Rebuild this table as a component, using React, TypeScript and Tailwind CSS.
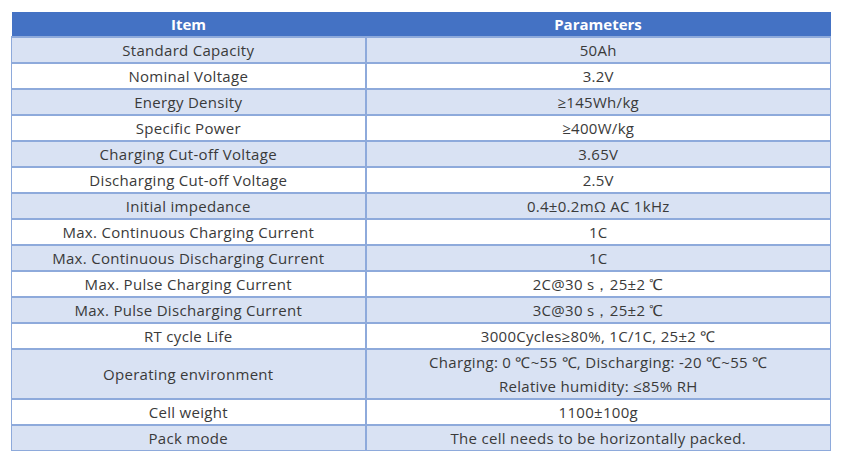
const rows: [string, string[]][] = [
  ['Standard Capacity', ['50Ah']],
  ['Nominal Voltage', ['3.2V']],
  ['Energy Density', ['≥145Wh/kg']],
  ['Specific Power', ['≥400W/kg']],
  ['Charging Cut-off Voltage', ['3.65V']],
  ['Discharging Cut-off Voltage', ['2.5V']],
  ['Initial impedance', ['0.4±0.2mΩ AC 1kHz']],
  ['Max. Continuous Charging Current', ['1C']],
  ['Max. Continuous Discharging Current', ['1C']],
  ['Max. Pulse Charging Current', ['2C@30 s，25±2 ℃']],
  ['Max. Pulse Discharging Current', ['3C@30 s，25±2 ℃']],
  ['RT cycle Life', ['3000Cycles≥80%, 1C/1C, 25±2 ℃']],
  ['Operating environment', ['Charging: 0 ℃~55 ℃, Discharging: -20 ℃~55 ℃', 'Relative humidity: ≤85% RH']],
  ['Cell weight', ['1100±100g']],
  ['Pack mode', ['The cell needs to be horizontally packed.']],
];

export default function App() {
  return (
    <div className="bg-white w-[841px] h-[462px] pt-[12px] pl-[11px] font-['Open_Sans',sans-serif] text-[15px] tracking-[0.3px] text-[#3a3a3a]">
      <table className="w-[820px] border-collapse table-fixed">
        <thead>
          <tr className="bg-[#4472c4] text-white">
            <th className="w-[354px] h-[24px] p-0 font-bold text-[15px] leading-[24px] tracking-normal">Item</th>
            <th className="h-[24px] p-0 font-bold text-[15px] leading-[24px] tracking-normal">Parameters</th>
          </tr>
        </thead>
        <tbody>
          {rows.map(([item, params], i) => {
            const last = i === rows.length - 1;
            return (
              <tr key={item} className={i % 2 === 0 ? 'bg-[#d9e2f3]' : 'bg-white'}>
                <td className={`p-0 text-center leading-[24px] border-l border-r-2 border-t-2 border-[#8eaadb] ${last ? 'border-b' : 'border-b-2'}`}>
                  {item}
                </td>
                <td className={`p-0 text-center leading-[24px] border-r border-t-2 border-[#8eaadb] ${last ? 'border-b' : 'border-b-2'}`}>
                  {params.map((p) => (
                    <div key={p}>{p}</div>
                  ))}
                </td>
              </tr>
            );
          })}
        </tbody>
      </table>
    </div>
  );
}
